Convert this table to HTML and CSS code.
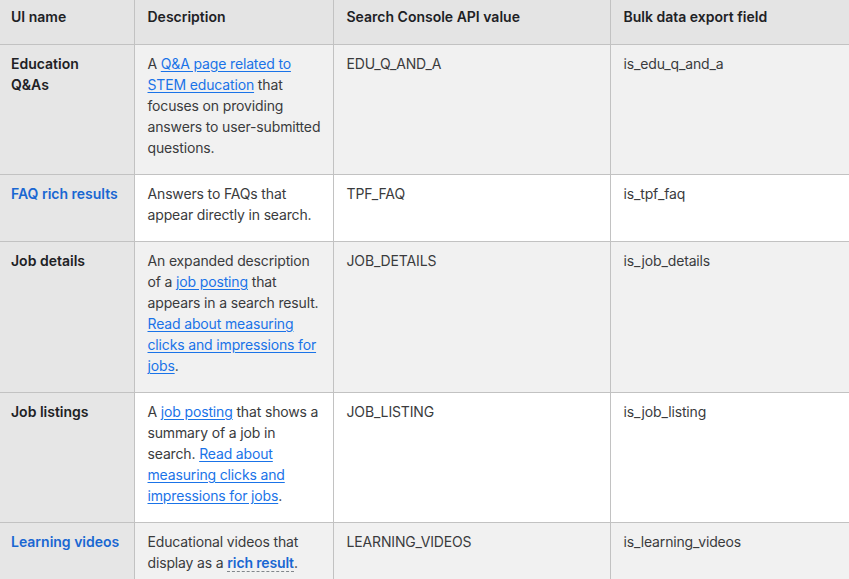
FILE: index.html
```html
<!DOCTYPE html>
<html lang="en">
<head>
<meta charset="utf-8">
<title>Search appearance types</title>
<link rel="stylesheet" href="styles.css">
</head>
<body>
<table class="grid">
  <colgroup>
    <col class="c-name">
    <col class="c-desc">
    <col class="c-api">
    <col class="c-bulk">
  </colgroup>
  <thead>
    <tr>
      <th>UI name</th>
      <th>Description</th>
      <th>Search Console API value</th>
      <th>Bulk data export field</th>
    </tr>
  </thead>
  <tbody>
    <tr class="odd">
      <th>Education Q&amp;As</th>
      <td>A <a href="#">Q&amp;A page related to STEM education</a> that focuses on providing answers to user-submitted questions.</td>
      <td>EDU_Q_AND_A</td>
      <td>is_edu_q_and_a</td>
    </tr>
    <tr class="even">
      <th><a class="name-link" href="#">FAQ rich results</a></th>
      <td>Answers to FAQs that appear directly in search.</td>
      <td>TPF_FAQ</td>
      <td>is_tpf_faq</td>
    </tr>
    <tr class="odd">
      <th>Job details</th>
      <td>An expanded description of a <a href="#">job posting</a> that appears in a search result. <a href="#">Read about measuring clicks and impressions for jobs</a>.</td>
      <td>JOB_DETAILS</td>
      <td>is_job_details</td>
    </tr>
    <tr class="even">
      <th>Job listings</th>
      <td>A <a href="#">job posting</a> that shows a summary of a job in search. <a href="#">Read about measuring clicks and impressions for jobs</a>.</td>
      <td>JOB_LISTING</td>
      <td>is_job_listing</td>
    </tr>
    <tr class="odd">
      <th><a class="name-link" href="#">Learning videos</a></th>
      <td>Educational videos that display as a <a class="glossary" href="#">rich result</a>.</td>
      <td>LEARNING_VIDEOS</td>
      <td>is_learning_videos</td>
    </tr>
  </tbody>
</table>
</body>
</html>
```

FILE: styles.css
```css
html, body {
  margin: 0;
  padding: 0;
  background: #ffffff;
}

body {
  font-family: Inter, "Noto Sans", sans-serif;
  font-size: 14px;
  line-height: 21px;
  color: #3a3b3d;
  overflow: hidden;
}

.grid {
  border-collapse: collapse;
  table-layout: fixed;
  width: 851px;
  margin-left: -2px;
}

.c-name { width: 136px; }
.c-desc { width: 199px; }
.c-api  { width: 277px; }
.c-bulk { width: 239px; }

.grid th,
.grid td {
  text-align: left;
  vertical-align: top;
  padding: 8px 8px 16px 13px;
  border: 1px solid #c2c2c2;
  letter-spacing: -0.15px;
}

.grid thead th {
  background: #e4e4e4;
  color: #202124;
  font-weight: 600;
  padding: 6px 13px 17px 13px;
  border-top: none;
  letter-spacing: 0;
}

.grid tbody th {
  background: #e6e6e6;
  color: #202124;
  font-weight: 600;
  padding-right: 15px;
  letter-spacing: 0;
}

.grid tr > :first-child {
  border-left: none;
}

.grid tr > :last-child {
  border-right: none;
}

.odd td { background: #f1f1f1; }
.even td { background: #ffffff; }

.grid a {
  color: #1a73e8;
  text-decoration: underline;
  text-underline-offset: 2px;
}

.grid a.name-link {
  color: #1967d2;
  text-decoration: none;
  font-weight: 600;
  white-space: nowrap;
}

.grid a.glossary {
  color: #1967d2;
  font-weight: 600;
  text-decoration: none;
  border-bottom: 1px dashed #80868b;
}
```
